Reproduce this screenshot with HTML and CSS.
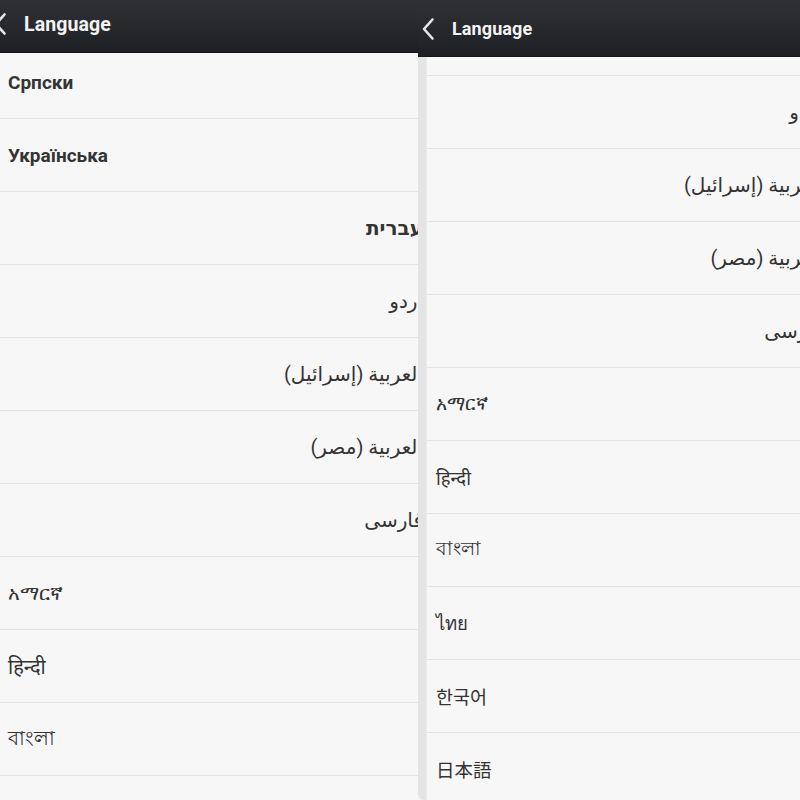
FILE: index.html
```html
<!DOCTYPE html>
<html lang="en">
<head>
<meta charset="utf-8">
<title>Language</title>
<link rel="stylesheet" href="styles.css">
</head>
<body>
<div class="screen">
  <section class="panel panel-left">
    <div class="inner">
      <header class="bar">
        <svg class="back" width="14" height="24" viewBox="0 0 14 24"><path d="M11.5 2.5 L3 12 L11.5 21.5" fill="none" stroke="#e6e6e6" stroke-width="2.6" stroke-linecap="round" stroke-linejoin="round"/></svg>
        <span class="title">Language</span>
      </header>
      <div class="viewport">
        <div class="strip"></div>
        <ul class="list">
          <li class="row bold">Српски</li>
          <li class="row bold">Українська</li>
          <li class="row rtl bold" lang="he">עברית</li>
          <li class="row rtl" lang="ur">اردو</li>
          <li class="row rtl" lang="ar">العربية (إسرائيل)</li>
          <li class="row rtl" lang="ar">العربية (مصر)</li>
          <li class="row rtl" lang="fa">فارسی</li>
          <li class="row" lang="am">አማርኛ</li>
          <li class="row" lang="hi">हिन्दी</li>
          <li class="row" lang="bn">বাংলা</li>
          <li class="row" lang="th">ไทย</li>
        </ul>
      </div>
    </div>
  </section>
  <section class="panel panel-right">
    <div class="inner">
      <header class="bar">
        <svg class="back" width="14" height="24" viewBox="0 0 14 24"><path d="M11.5 2.5 L3 12 L11.5 21.5" fill="none" stroke="#e6e6e6" stroke-width="2.6" stroke-linecap="round" stroke-linejoin="round"/></svg>
        <span class="title">Language</span>
      </header>
      <div class="viewport">
        <div class="strip"></div>
        <ul class="list">
          <li class="row rtl bold" lang="he">עברית</li>
          <li class="row rtl" lang="ur">اردو</li>
          <li class="row rtl" lang="ar">العربية (إسرائيل)</li>
          <li class="row rtl" lang="ar">العربية (مصر)</li>
          <li class="row rtl" lang="fa">فارسی</li>
          <li class="row" lang="am">አማርኛ</li>
          <li class="row" lang="hi">हिन्दी</li>
          <li class="row" lang="bn">বাংলা</li>
          <li class="row" lang="th">ไทย</li>
          <li class="row" lang="ko">한국어</li>
          <li class="row" lang="ja">日本語</li>
          <li class="row">中文 (简体)</li>
        </ul>
      </div>
    </div>
  </section>
</div>
</body>
</html>
```
FILE: styles.css
```css
html, body {
  margin: 0;
  padding: 0;
  background: #f7f7f7;
}
body {
  font-family: Roboto, "Noto Sans", "DejaVu Sans", "Noto Sans CJK KR", sans-serif;
  color: #343434;
}
.screen {
  display: flex;
  width: 800px;
  height: 800px;
  overflow: hidden;
}
.panel {
  height: 800px;
  overflow: hidden;
  flex: none;
}
.panel-left {
  width: 418px;
}
.panel-left .inner {
  width: 443px;
  margin-left: -10px;
}
.panel-right {
  width: 382px;
}
.panel-right .inner {
  width: 415px;
}
.inner {
  height: 800px;
  display: flex;
  flex-direction: column;
}
.bar {
  flex: none;
  display: flex;
  align-items: center;
  gap: 17px;
  padding-left: 3px;
  box-sizing: border-box;
  background: linear-gradient(#303136, #26272b 60%, #1e1f23);
  border-bottom: 1px solid #15161a;
  position: relative;
  z-index: 2;
}
.panel-left .bar {
  height: 53px;
  padding-bottom: 4px;
}
.panel-right .bar {
  height: 57px;
  padding-top: 1px;
}
.back {
  display: block;
  flex: none;
}
.title {
  color: #f4f4f4;
  font-family: Roboto, sans-serif;
  font-weight: 700;
  font-size: 18px;
  letter-spacing: 0.1px;
}
.panel-left .title {
  font-size: 19.5px;
}
.viewport {
  flex: 1;
  display: flex;
  overflow: hidden;
  background: #f7f7f7;
}
.strip {
  flex: none;
  width: 9px;
  background: #e4e4e4;
  border-right: 1px solid #ececec;
  box-sizing: border-box;
  border-bottom-left-radius: 6px;
}
.list {
  list-style: none;
  margin: 0;
  padding: 0;
  flex: 1;
  min-width: 0;
}
.panel-left .list {
  margin-top: -7px;
}
.panel-right .list {
  margin-top: -54px;
}
.row {
  height: 72px;
  border-bottom: 1px solid #e3e3e3;
  display: flex;
  align-items: center;
  padding: 0 10px 0 9px;
  font-size: 18.5px;
  white-space: nowrap;
}
.panel-left .row {
  font-size: 20px;
}
.row.bold {
  font-weight: 700;
}
.panel-left .row.bold {
  font-size: 19px;
}
.row.rtl,
.panel-left .row.rtl {
  direction: rtl;
  font-size: 20px;
}
```
